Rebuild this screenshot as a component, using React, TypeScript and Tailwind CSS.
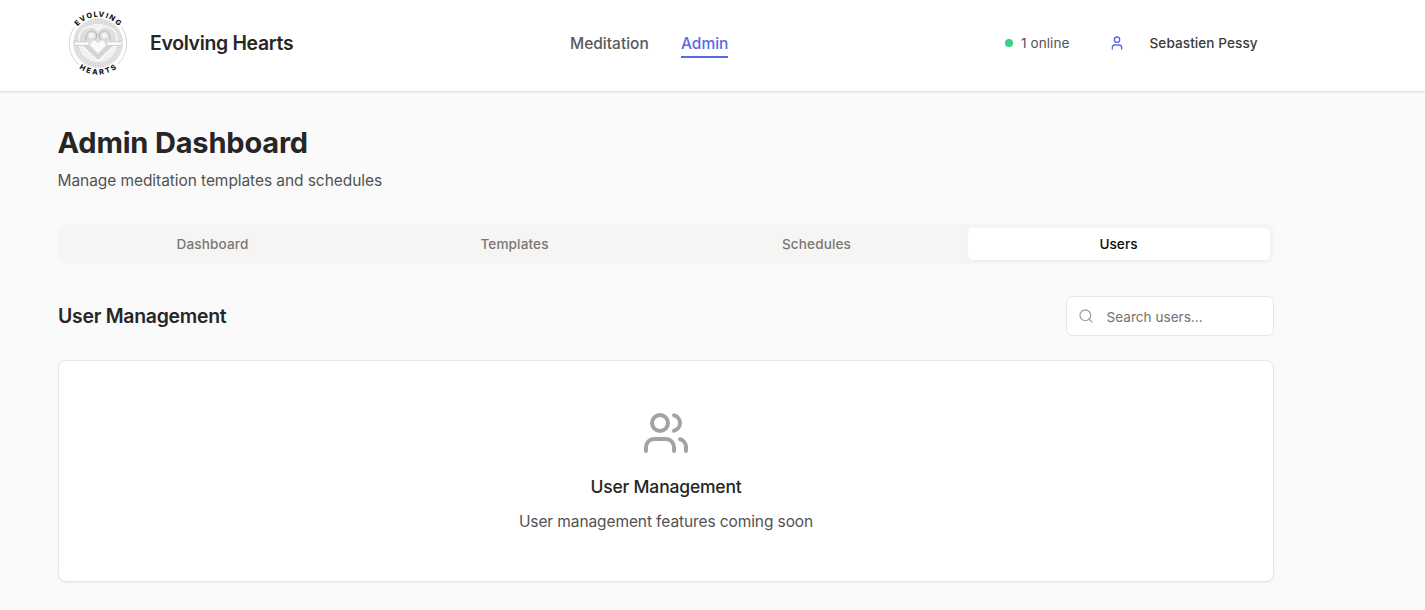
import { Search, User, Users } from "lucide-react";

const tabs = ["Dashboard", "Templates", "Schedules", "Users"];

const rays = Array.from({ length: 60 }, (_, i) => (i * 2 * Math.PI) / 60);

function Logo() {
  return (
    <svg className="size-20 shrink-0" viewBox="0 0 80 80" fill="none">
      <defs>
        <path id="arc-top" d="M 13.7 39 A 26.3 26.3 0 0 1 66.3 39" />
        <path id="arc-bottom" d="M 8.2 38.7 A 31.8 31.8 0 0 0 71.8 38.7" />
      </defs>
      <path d="M16.5 23 A28.6 28.6 0 0 0 20.5 60.5 M63.5 23 A28.6 28.6 0 0 1 59.5 60.5" stroke="#c8c8c8" strokeWidth="0.8" />
      <circle cx="40" cy="39" r="21.9" stroke="#e8e8e8" strokeWidth="5.8" />
      <g stroke="#c6c6c6" strokeWidth="0.7">
        {rays.map((a) => (
          <line
            key={a}
            x1={40 + 19 * Math.cos(a)}
            y1={39 + 19 * Math.sin(a)}
            x2={40 + 24.8 * Math.cos(a)}
            y2={39 + 24.8 * Math.sin(a)}
          />
        ))}
      </g>
      <circle cx="40" cy="39" r="18.8" fill="#f1f1f1" />
      <path d="M40 57 L23 41 C18 33 23 24 31 23 C36 22.5 39 25 40 27 C41 25 44 22.5 49 23 C57 24 62 33 57 41 Z" fill="#dedede" stroke="#f8f8f8" strokeWidth="1.4" />
      <path d="M40 54.5 L26 41 M40 52 L29 41 M40 54.5 L54 41 M40 52 L51 41" stroke="#c2c2c2" strokeWidth="0.9" />
      <path d="M40 49 L32 41 L36 35.5 L40 39.5 L44 35.5 L48 41 Z" fill="#fbfbfb" />
      <path d="M28 36 C27 27 35 24 38.5 30 C39.5 33 38 35 36 36.5 M52 36 C53 27 45 24 41.5 30 C40.5 33 42 35 44 36.5" stroke="#b5b5b5" strokeWidth="1" />
      <circle cx="33.5" cy="31.5" r="2.6" fill="#f5f5f5" />
      <circle cx="46.5" cy="31.5" r="2.6" fill="#f5f5f5" />
      <path d="M17 39.5 H30 M50 39.5 H63" stroke="#ffffff" strokeWidth="2.4" />
      <path d="M16 37.8 H29 M17 41.4 H26 M51 37.8 H63 M54 41.4 H63" stroke="#c6c6c6" strokeWidth="0.7" />
      <g fill="#171717" fontFamily="Inter, sans-serif" fontWeight="800" fontSize="7.3" textAnchor="middle">
        <text letterSpacing="1.2">
          <textPath href="#arc-top" startOffset="50.5%">EVOLVING</textPath>
        </text>
        <text letterSpacing="2">
          <textPath href="#arc-bottom" startOffset="51%">HEARTS</textPath>
        </text>
      </g>
    </svg>
  );
}

export default function App() {
  return (
    <div className="min-h-[610px] bg-[#fafafa] font-['Inter',sans-serif] text-[#262626]">
      <header className="flex h-[92px] items-start border-b border-[#e2e2e2] bg-white pl-[58px] shadow-[0_1px_2px_rgba(0,0,0,0.05)]">
        <div className="flex w-[512px] items-start pt-1">
          <Logo />
          <span className="mt-[25px] ml-3 text-[19.4px] leading-7 font-semibold tracking-[-0.3px]">Evolving Hearts</span>
        </div>
        <nav className="flex w-[435px] gap-8 pt-8 text-[15.5px] leading-6 font-medium text-[#5a5a5a]">
          <a className="h-[26px] w-[79px] whitespace-nowrap">Meditation</a>
          <a className="h-[26px] w-[47px] border-b-2 border-[#5b68e8] text-[#5b68e8]">Admin</a>
        </nav>
        <div className="flex items-center pt-[33px] text-[13.6px] leading-5">
          <span className="size-2 rounded-full bg-[#36d183]" />
          <span className="ml-2 w-[88px] tracking-[0.05px] text-[#525252]">1 online</span>
          <User className="size-4 text-[#5b68e8]" />
          <span className="ml-[24.5px] font-medium tracking-[0.06px] text-[#3a3a3a]">Sebastien Pessy</span>
        </div>
      </header>
      <main className="ml-[58px] w-[1216px] pt-[33px]">
        <h1 className="-ml-[0.5px] text-[29px] leading-9 font-bold tracking-[-0.18px]">Admin Dashboard</h1>
        <p className="mt-2 -ml-[0.5px] text-[15.5px] leading-6 tracking-[-0.07px] text-[#525252]">Manage meditation templates and schedules</p>
        <div className="mt-[31px] grid h-10 grid-cols-4 rounded-lg bg-[#f5f5f4] p-1">
          {tabs.map((tab) => (
            <button
              key={tab}
              className={
                tab === "Users"
                  ? "rounded-[5px] bg-white pr-px text-[13.6px] leading-5 font-medium tracking-[0.05px] text-[#0c0a09] shadow-[0_1px_2px_rgba(0,0,0,0.05)]"
                  : "pr-px text-[13.6px] leading-5 font-medium tracking-[0.1px] text-[#7d7671]"
              }
            >
              {tab}
            </button>
          ))}
        </div>
        <div className="mt-8 flex h-10 items-center justify-between">
          <h2 className="text-[19.4px] leading-7 font-semibold tracking-[-0.25px]">User Management</h2>
          <label className="flex h-10 w-52 items-center rounded-md border border-[#e5e5e5] bg-white pl-[11px]">
            <Search className="size-4 text-[#a3a3a3]" />
            <input
              className="ml-[12.5px] w-40 pt-0.5 text-[13.6px] leading-5 outline-none placeholder:text-[#78716c]"
              placeholder="Search users..."
            />
          </label>
        </div>
        <section className="mt-6 flex h-[222px] flex-col items-center rounded-lg border border-[#e5e5e5] bg-white pt-12 shadow-[0_1px_2px_rgba(0,0,0,0.05)]">
          <Users className="size-12 text-[#a3a3a3]" />
          <h3 className="mt-4 text-[17.5px] leading-7 font-medium tracking-[-0.18px]">User Management</h3>
          <p className="mt-[9px] text-[15.5px] leading-6 tracking-[-0.1px] text-[#525252]">User management features coming soon</p>
        </section>
      </main>
    </div>
  );
}
